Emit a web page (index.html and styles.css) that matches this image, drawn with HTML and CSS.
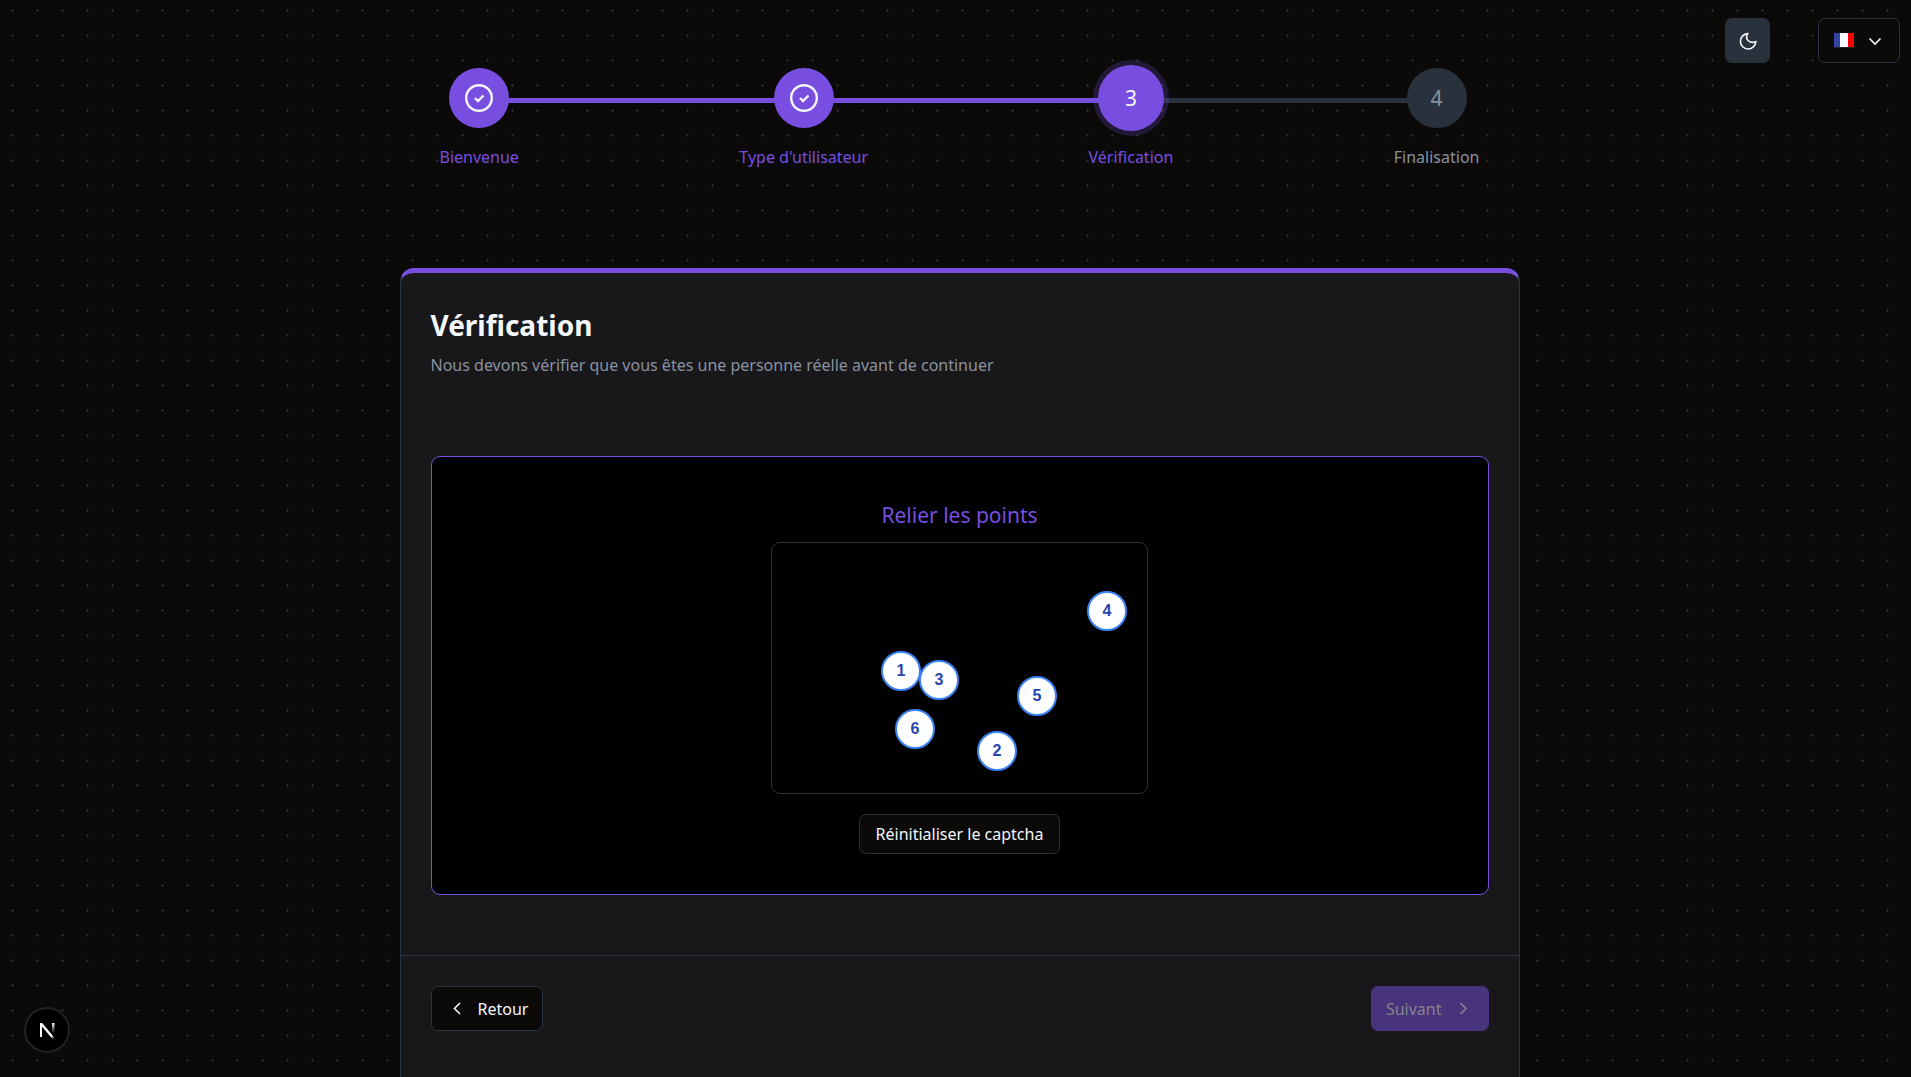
FILE: index.html
```html
<!DOCTYPE html>
<html lang="fr">
<head>
  <meta charset="utf-8">
  <meta name="viewport" content="width=device-width, initial-scale=1">
  <title>Vérification</title>
  <link rel="stylesheet" href="styles.css">
</head>
<body>
  <div class="toolbar">
    <button class="icon-button" type="button" aria-label="Changer de thème">
      <svg class="icon" viewBox="0 0 18 18" width="18" height="18" aria-hidden="true"><path class="stroke" d="M8.600 1.600A7.700 7.700 0 1 0 16.800 9.700C11 12 5.500 7.500 8.600 1.600Z"/></svg>
    </button>
    <button class="language-button" type="button" aria-label="Langue : français">
      <svg class="flag" viewBox="0 0 20 15" width="20" height="15" aria-hidden="true"><path fill="#3044a2" d="M0 0h6v14H0z"/><path fill="#f9fbff" d="M6 0h8v14H6z"/><path fill="#f80000" d="M14 0h6v14h-6z"/><path fill="#24242c" d="M0 14h20v1H0z"/></svg>
      <svg class="icon" viewBox="0 0 18 18" width="18" height="18" aria-hidden="true"><path class="stroke" d="M3.500 6.500l5.500 5.500L14.500 6.500"/></svg>
    </button>
  </div>

  <main class="page">
    <ol class="steps">
      <li class="track" aria-hidden="true"><span class="track-done"></span></li>
      <li class="step step-done">
        <span class="step-mark"><svg viewBox="0 0 28 28" width="28" height="28" aria-hidden="true"><circle cx="14" cy="14" r="12.800"/><path d="M10 14l3 3 5.500-5.500"/></svg></span>
        <span class="step-label">Bienvenue</span>
      </li>
      <li class="step step-done">
        <span class="step-mark"><svg viewBox="0 0 28 28" width="28" height="28" aria-hidden="true"><circle cx="14" cy="14" r="12.800"/><path d="M10 14l3 3 5.500-5.500"/></svg></span>
        <span class="step-label">Type d'utilisateur</span>
      </li>
      <li class="step step-current" aria-current="step">
        <span class="step-mark">3</span>
        <span class="step-label">Vérification</span>
      </li>
      <li class="step">
        <span class="step-mark">4</span>
        <span class="step-label">Finalisation</span>
      </li>
    </ol>

    <section class="card">
      <header class="card-header">
        <h1>Vérification</h1>
        <p>Nous devons vérifier que vous êtes une personne réelle avant de continuer</p>
      </header>
      <div class="card-body">
        <div class="captcha">
          <h2>Relier les points</h2>
          <div class="board">
            <button class="dot dot-1" type="button">1</button>
            <button class="dot dot-2" type="button">2</button>
            <button class="dot dot-3" type="button">3</button>
            <button class="dot dot-4" type="button">4</button>
            <button class="dot dot-5" type="button">5</button>
            <button class="dot dot-6" type="button">6</button>
          </div>
          <button class="button button-small" type="button">Réinitialiser le captcha</button>
        </div>
      </div>
      <footer class="card-footer">
        <button class="button" type="button">
          <svg class="icon" viewBox="0 0 18 18" width="18" height="18" aria-hidden="true"><path class="stroke" d="M12 3L6.500 8.500 12 14"/></svg>
          Retour
        </button>
        <button class="button button-primary" type="button" disabled>
          Suivant
          <svg class="icon" viewBox="0 0 18 18" width="18" height="18" aria-hidden="true"><path class="stroke" d="M6.500 3l5.500 5.500L6.500 14"/></svg>
        </button>
      </footer>
    </section>
  </main>

  <button class="dev-badge" type="button" aria-label="Outils de développement">
    <svg viewBox="0 0 20 20" width="20" height="20" aria-hidden="true">
      <defs>
        <linearGradient id="fade-diagonal" x1="10" y1="11" x2="17" y2="19" gradientUnits="userSpaceOnUse"><stop stop-color="#fff"/><stop offset=".6" stop-color="#fff"/><stop offset="1" stop-color="#fff" stop-opacity="0"/></linearGradient>
        <linearGradient id="fade-stem" x1="15" y1="3" x2="15" y2="13" gradientUnits="userSpaceOnUse"><stop stop-color="#fff"/><stop offset="1" stop-color="#fff" stop-opacity="0"/></linearGradient>
      </defs>
      <path d="M4 17V3" stroke="#fff" stroke-width="2"/>
      <path d="M4 3.500L17 19" stroke="url(#fade-diagonal)" stroke-width="2.400"/>
      <path fill="url(#fade-stem)" d="M15 3h2.500v10H15z"/>
    </svg>
  </button>
</body>
</html>
```
FILE: styles.css
```css
:root {
  --background: #0b0a09;
  --card: #18181b;
  --border: #29323f;
  --muted: #29313d;
  --muted-text: #8a919e;
  --text: #f4f6fb;
  --primary: #784ee0;
}

* {
  box-sizing: border-box;
}

body {
  margin: 0;
  height: 100vh;
  overflow: hidden auto;
  scrollbar-width: none;
  background-color: var(--background);
  background-image: url("data:image/svg+xml,%3Csvg xmlns='http://www.w3.org/2000/svg' width='25' height='25'%3E%3Cpath fill='%232b2b2b' d='M12 9h1v3h-1zM11 10h3v1h-3z'/%3E%3C/svg%3E");
  color: var(--text);
  font: 16px/28px "Segoe UI", "Noto Sans", sans-serif;
}

button {
  font: inherit;
  color: inherit;
  cursor: pointer;
}

h1,
h2,
p,
ol {
  margin: 0;
  padding: 0;
}

.icon {
  display: block;
  flex: none;
}

.stroke {
  fill: none;
  stroke: currentColor;
  stroke-width: 1.6;
}

.toolbar {
  position: absolute;
  top: 18px;
  right: 11px;
  display: flex;
  gap: 48px;
}

.icon-button,
.language-button {
  display: flex;
  align-items: center;
  justify-content: center;
  height: 45px;
  border-radius: 7px;
}

.icon-button {
  width: 45px;
  padding: 0;
  border: 0;
  background: var(--muted);
}

.language-button {
  gap: 12px;
  padding: 0 15px;
  border: 1px solid var(--border);
  background: var(--background);
}

.page {
  max-width: 1128px;
  margin: 0 auto;
  padding: 65px 0 0 8px;
}

.steps {
  position: relative;
  display: flex;
  justify-content: space-between;
  margin: 0 40px 97px;
  list-style: none;
}

.track {
  position: absolute;
  top: 33px;
  left: 40px;
  right: 43px;
  height: 5px;
  background: var(--muted);
}

.track-done {
  display: block;
  width: 67%;
  height: 100%;
  background: var(--primary);
}

.step {
  position: relative;
  display: flex;
  flex-direction: column;
  align-items: center;
  gap: 12px;
  color: var(--muted-text);
}

.step-mark {
  display: flex;
  align-items: center;
  justify-content: center;
  width: 60px;
  height: 60px;
  margin: 3px 0;
  border-radius: 50%;
  background: var(--muted);
  font-size: 21px;
}

.step-mark svg {
  fill: none;
  stroke: var(--text);
  stroke-width: 2.4;
}

.step-done,
.step-current {
  color: var(--primary);
}

.step-done .step-mark,
.step-current .step-mark {
  background: var(--primary);
  color: var(--text);
}

.step-current .step-mark {
  width: 66px;
  height: 66px;
  margin: 0;
  box-shadow: 0 0 0 5px rgb(120 78 224 / 22%);
}

.card {
  border: 1px solid var(--border);
  border-top: 5px solid var(--primary);
  border-radius: 14px;
  background: var(--card);
}

.card-header {
  padding: 30px 30px 0;
}

.card-header h1 {
  font-size: 28px;
  line-height: 44px;
}

.card-header p {
  margin-top: 4px;
  color: var(--muted-text);
}

.card-body {
  padding: 77px 30px 60px;
}

.captcha {
  display: flex;
  flex-direction: column;
  align-items: center;
  padding: 40px 20px;
  border: 1px solid var(--primary);
  border-radius: 9px;
  background: #000;
}

.captcha h2 {
  margin-bottom: 9px;
  color: var(--primary);
  font-size: 21px;
  font-weight: 400;
  line-height: 36px;
}

.board {
  position: relative;
  width: 377px;
  height: 252px;
  margin-bottom: 20px;
  border: 1px solid var(--border);
  border-radius: 9px;
}

.dot {
  position: absolute;
  width: 40px;
  height: 40px;
  padding: 0;
  border: 2px solid #3b82f6;
  border-radius: 50%;
  background: #fff;
  color: #2546b0;
  font: bold 16px/36px "Liberation Sans", Arial, sans-serif;
}

.dot-1 { left: 109px; top: 108px; }
.dot-2 { left: 205px; top: 188px; }
.dot-3 { left: 147px; top: 117px; }
.dot-4 { left: 315px; top: 48px; }
.dot-5 { left: 245px; top: 133px; }
.dot-6 { left: 123px; top: 166px; }

.button {
  display: flex;
  align-items: center;
  gap: 12px;
  height: 45px;
  padding: 0 14px 0 16px;
  border: 1px solid var(--border);
  border-radius: 7px;
  background: var(--background);
}

.button-small {
  height: 40px;
  padding: 0 16px;
}

.button-primary {
  padding: 0 16px 0 14px;
  border-color: transparent;
  background: var(--primary);
}

.button-primary:disabled {
  border-color: #48337d;
  background: #48337d;
  color: #86858c;
  cursor: default;
}

.card-footer {
  display: flex;
  justify-content: space-between;
  padding: 30px 30px 60px;
  border-top: 1px solid var(--border);
}

.dev-badge {
  position: fixed;
  left: 24px;
  bottom: 24px;
  display: flex;
  align-items: center;
  justify-content: center;
  width: 46px;
  height: 46px;
  padding: 0;
  border: 2px solid #222;
  border-radius: 50%;
  background: #000;
}
```
